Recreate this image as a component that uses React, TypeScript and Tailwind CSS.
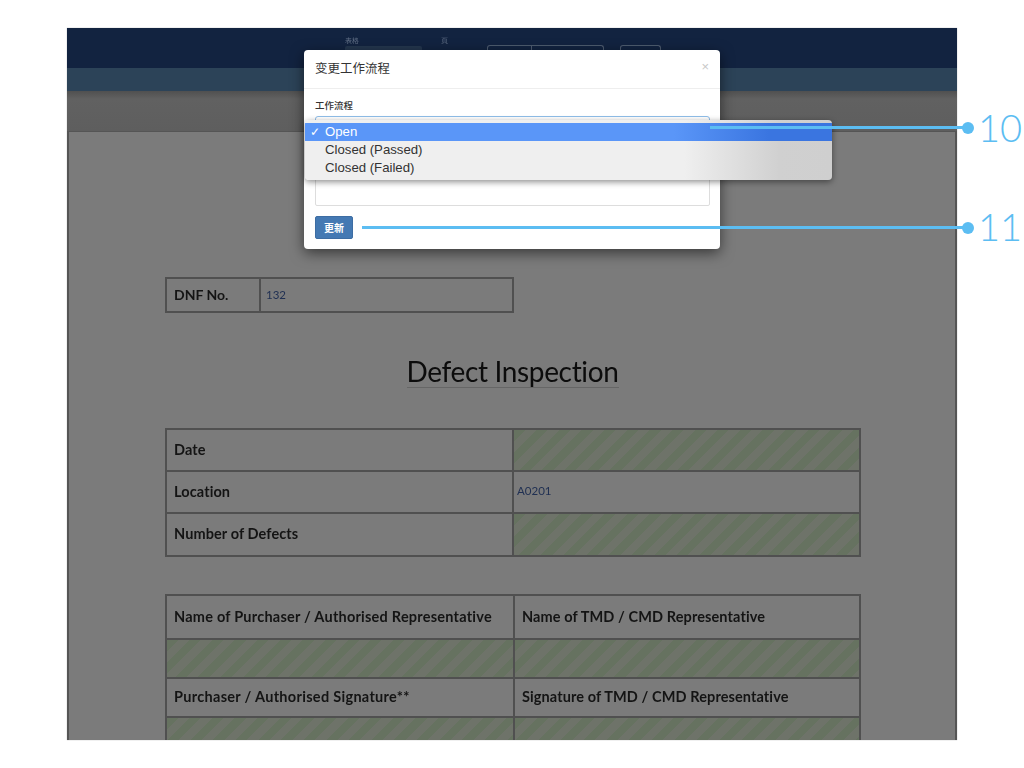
const stripes =
  "bg-[repeating-linear-gradient(135deg,#667260_0px,#667260_8px,#6e7369_8px,#6e7369_16px)]";
const cell = "border-2 border-[#505050] px-[7px] align-middle";
const label = "font-bold text-[#141414] text-[14.5px] tracking-[0.1px] pb-[1px]";
const value = "text-[#1f2f52] text-[11.5px]";

function TopBar() {
  return (
    <>
      <div className="h-[40px] shrink-0 bg-[#122340] flex items-start pl-[278px] pt-[8px] text-[7px] leading-[9px] text-[#66748a]">
        <div className="w-[96px] flex flex-col gap-[1px] blur-[0.4px]">
          <span>表格</span>
          <div className="w-[77px] h-[8px] rounded-[2px] bg-[#24364e]" />
        </div>
        <span className="w-[46px] blur-[0.4px]">頁</span>
        <div className="flex mt-[9px] h-[8px] blur-[0.4px]">
          <div className="w-[45px] border border-b-0 border-[#4d5b6f] rounded-tl-[3px]" />
          <div className="w-[72px] border border-b-0 border-l-0 border-[#4d5b6f] rounded-tr-[3px]" />
          <div className="w-[41px] ml-[16px] border border-b-0 border-[#4d5b6f] rounded-t-[3px]" />
        </div>
      </div>
      <div className="h-[23px] shrink-0 bg-[#2c4358]" />
      <div className="h-[40px] shrink-0 bg-[linear-gradient(#505050,#616161_20%,#5e5e5e)]" />
    </>
  );
}

function Paper() {
  return (
    <div className="flex-1 min-h-0 bg-[#7b7b7b] border-x-2 border-t border-[#555555] pl-[96px] pt-[145px] font-['Lato',sans-serif] blur-[0.3px]">
      <table className="table-fixed border-collapse w-[349px] h-[36px]">
        <tbody>
          <tr>
            <td className={`${cell} font-bold text-[#141414] text-[14px] pb-[2px] w-[94px]`}>DNF No.</td>
            <td className={`${cell} ${value} pl-[5px]`}>132</td>
          </tr>
        </tbody>
      </table>

      <div className="w-[695px] mt-[43px] mb-[40px] flex justify-center">
        <h1 className="text-[28px] leading-[31px] text-[#0c0c0c] border-b border-[#666] tracking-[-0.35px]">
          Defect Inspection
        </h1>
      </div>

      <table className="table-fixed border-collapse w-[696px]">
        <tbody>
          <tr className="h-[42px]">
            <td className={`${cell} ${label} w-[347px]`}>Date</td>
            <td className={`${cell} ${stripes}`} />
          </tr>
          <tr className="h-[42px]">
            <td className={`${cell} ${label}`}>Location</td>
            <td className={`${cell} ${value} pl-[3px] pb-[3px]`}>A0201</td>
          </tr>
          <tr className="h-[43px]">
            <td className={`${cell} ${label}`}>Number of Defects</td>
            <td className={`${cell} ${stripes}`} />
          </tr>
        </tbody>
      </table>

      <table className="table-fixed border-collapse w-[696px] mt-[37px]">
        <tbody>
          <tr className="h-[44px]">
            <td className={`${cell} ${label} w-[348px] tracking-[0.23px]`}>Name of Purchaser / Authorised Representative</td>
            <td className={`${cell} ${label}`}>Name of TMD / CMD Representative</td>
          </tr>
          <tr className="h-[39px]">
            <td className={`${cell} ${stripes}`} />
            <td className={`${cell} ${stripes}`} />
          </tr>
          <tr className="h-[39px]">
            <td className={`${cell} ${label} tracking-[0.3px]`}>Purchaser / Authorised Signature**</td>
            <td className={`${cell} ${label}`}>Signature of TMD / CMD Representative</td>
          </tr>
          <tr className="h-[39px]">
            <td className={`${cell} ${stripes}`} />
            <td className={`${cell} ${stripes}`} />
          </tr>
        </tbody>
      </table>
    </div>
  );
}

function Dropdown() {
  return (
    <div className="absolute left-[1px] top-[70px] w-[527px] h-[60px] pt-[3px] rounded-[4px] overflow-hidden bg-[linear-gradient(90deg,#efefef_0%,#efefef_72%,#d0d0d0_90%,#cfcfcf_100%)] shadow-[0_2px_6px_rgba(0,0,0,0.45)] font-['Liberation_Sans',sans-serif] text-[13.2px] leading-[18px] text-[#333]">
      <div className="relative h-[18px] pl-[20px] text-white bg-[linear-gradient(90deg,#5a96f8_0%,#5a96f8_70%,#3a75e0_88%,#3a75e0_100%)]">
        <span className="absolute left-[5px] text-[12px]">✓</span>
        Open
      </div>
      <div className="h-[18px] pl-[20px]">Closed (Passed)</div>
      <div className="h-[18px] pl-[20px]">Closed (Failed)</div>
    </div>
  );
}

function Modal() {
  return (
    <div className="absolute left-[304px] top-[50px] w-[416px] h-[199px] bg-white rounded-[4px] shadow-[0_4px_14px_rgba(0,0,0,0.55)] font-['Noto_Sans_CJK_TC',sans-serif]">
      <div className="h-[39px] border-b border-[#eeeeee] pl-[11px] pr-[11px] flex items-center justify-between">
        <span className="text-[12.5px] text-[#333] -mt-[2px]">变更工作流程</span>
        <span className="text-[13px] text-[#c8c8c8] font-['Liberation_Sans',sans-serif] -mt-[4px]">×</span>
      </div>
      <div className="pl-[11px] pr-[10px] pt-[10px] flex flex-col">
        <span className="text-[9.5px] leading-[12px] font-medium text-[#333]">工作流程</span>
        <div className="mt-[5px] h-[20px] border border-[#8fbde8] rounded-[3px]" />
        <div className="mt-[24px] h-[46px] border border-[#dddddd] rounded-[2px]" />
        <button className="mt-[10px] w-[38px] h-[23px] rounded-[2px] bg-[#4479b3] border border-[#3d6da3] text-white text-[10px] font-bold">
          更新
        </button>
      </div>
      <Dropdown />
    </div>
  );
}

export default function App() {
  return (
    <div className="relative w-[1024px] h-[768px] bg-white overflow-hidden pt-[28px] pl-[67px]">
      <div className="w-[890px] h-[712px] flex flex-col overflow-hidden shadow-[0_0_1px_rgba(0,0,0,0.35)]">
        <TopBar />
        <Paper />
      </div>
      <Modal />

      {/* callout 10 */}
      <div className="absolute left-[710px] top-[126px] w-[255px] h-[3px] bg-[#5cbdf2]" />
      <div className="absolute left-[962px] top-[122px] w-[12px] h-[12px] rounded-full bg-[#5cbdf2]" />
      <div className="absolute left-[978px] top-[104px] text-[38px] leading-[46px] text-[#5cbdf2] font-['Lato',sans-serif] font-light">10</div>

      {/* callout 11 */}
      <div className="absolute left-[362px] top-[226px] w-[603px] h-[3px] bg-[#5cbdf2]" />
      <div className="absolute left-[962px] top-[222px] w-[12px] h-[12px] rounded-full bg-[#5cbdf2]" />
      <div className="absolute left-[978px] top-[203px] text-[38px] leading-[46px] text-[#5cbdf2] font-['Lato',sans-serif] font-light">11</div>
    </div>
  );
}
